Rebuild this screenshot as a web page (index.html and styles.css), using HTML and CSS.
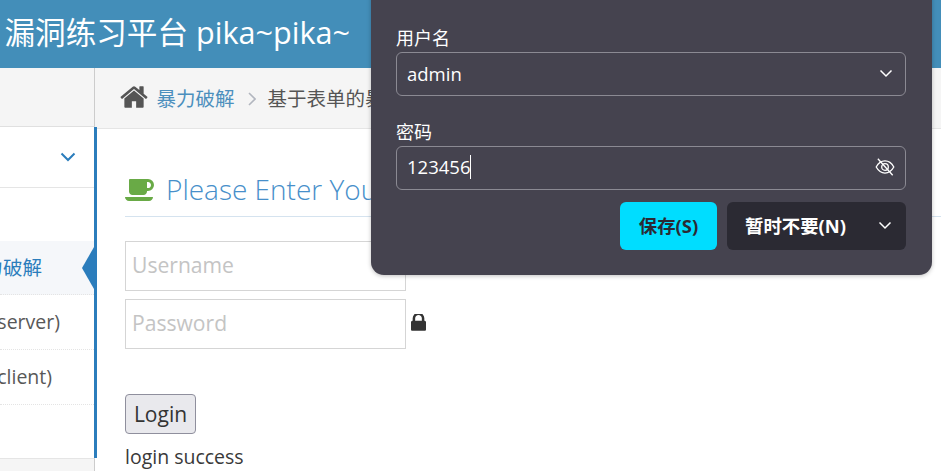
FILE: index.html
```html
<!DOCTYPE html>
<html lang="zh">
<head>
<meta charset="utf-8">
<title>Pikachu</title>
<link rel="stylesheet" href="styles.css">
</head>
<body>
<div class="page">
  <header class="topbar">漏洞练习平台 pika~pika~</header>
  <div class="layout">
    <aside class="sidebar">
      <div class="shortcuts"></div>
      <nav class="nav">
        <div class="nav-head">
          <svg class="nav-chevron" viewBox="0 0 16 10"><path d="M1.500 1.500 8 8l6.500-6.500" fill="none" stroke="currentColor" stroke-width="2"/></svg>
        </div>
        <div class="nav-gap"></div>
        <div class="nav-item active"><span>基于表单的暴力破解</span></div>
        <div class="nav-item"><span>验证码绕过(on server)</span></div>
        <div class="nav-item"><span>验证码绕过(on client)</span></div>
        <div class="nav-rest"></div>
      </nav>
      <div class="side-foot"></div>
    </aside>
    <main class="main">
      <div class="breadcrumb">
        <svg class="home" viewBox="0 0 1792 1792"><path d="M1472 992v480q0 26-19 45t-45 19h-384v-384h-256v384h-384q-26 0-45-19t-19-45v-480q0-1 .5-3t.5-3l575-474 575 474q1 2 1 6zm223-69l-62 74q-8 9-21 11h-3q-13 0-21-7l-692-577-692 577q-12 8-24 7-13-2-21-11l-62-74q-8-10-7-23.500t11-21.500l719-599q32-26 76-26t76 26l244 204v-195q0-14 9-23t23-9h192q14 0 23 9t9 23v408l219 182q10 8 11 21.500t-7 23.500z"/></svg>
        <a class="crumb-link">暴力破解</a>
        <svg class="crumb-sep" viewBox="0 0 8 14"><path d="M1 1l6 6-6 6" fill="none" stroke="currentColor" stroke-width="1.600"/></svg>
        <span class="crumb-text">基于表单的暴力破解</span>
      </div>
      <section class="content">
        <h4 class="title">
          <svg class="coffee" viewBox="-64 256 1920 1408"><path d="M1600 640q0-80-56-136t-136-56h-64v384h64q80 0 136-56t56-136zm-1664 768h1792q0 106-75 181t-181 75h-1280q-106 0-181-75t-75-181zm1856-768q0 159-112.500 271.500t-271.500 112.500h-64v32q0 92-66 158t-158 66h-704q-92 0-158-66t-66-158v-736q0-26 19-45t45-19h1152q159 0 271.500 112.500t112.500 271.500z"/></svg>
          <span>Please Enter Your Information</span>
        </h4>
        <div class="field"><input class="input" placeholder="Username"></div>
        <div class="field">
          <input class="input" placeholder="Password">
          <svg class="lock" viewBox="320 256 1152 1280"><path d="M640 768h512v-192q0-106-75-181t-181-75-181 75-75 181v192zm832 96v576q0 40-28 68t-68 28h-960q-40 0-68-28t-28-68v-576q0-40 28-68t68-28h32v-192q0-184 132-316t316-132 316 132 132 316v192h32q40 0 68 28t28 68z"/></svg>
        </div>
        <button class="login">Login</button>
        <p class="status">login success</p>
      </section>
    </main>
  </div>
  <div class="popup">
    <label class="pop-label">用户名</label>
    <div class="pop-input">
      <span>admin</span>
      <svg class="pop-chevron" viewBox="0 0 14 9"><path d="M1.500 1.500 7 7l5.500-5.500" fill="none" stroke="currentColor" stroke-width="1.500"/></svg>
    </div>
    <label class="pop-label second">密码</label>
    <div class="pop-input">
      <span class="typed">123456</span>
      <svg class="pop-eye" viewBox="0 0 20 20" fill="none" stroke="currentColor" stroke-width="1.200"><path d="M2 10c2-3.600 4.800-5.500 8-5.500s6 1.900 8 5.500c-2 3.600-4.800 5.500-8 5.500S4 13.600 2 10z"/><circle cx="10" cy="10" r="3"/><path d="M3.500 2.500l13.500 15"/></svg>
    </div>
    <div class="pop-actions">
      <button class="btn-save">保存(S)</button>
      <button class="btn-later">
        <span>暂时不要(N)</span>
        <svg class="pop-chevron" viewBox="0 0 14 9"><path d="M1.500 1.500 7 7l5.500-5.500" fill="none" stroke="currentColor" stroke-width="1.500"/></svg>
      </button>
    </div>
  </div>
</div>
</body>
</html>
```
FILE: styles.css
```css
* { box-sizing: border-box; }
html, body { margin: 0; height: 100%; overflow: hidden; }
body {
  background: #fff;
  color: #393939;
  font-family: "Open Sans", "Noto Sans CJK SC", sans-serif;
  font-size: 19.5px;
}
.page { position: relative; width: 941px; height: 471px; overflow: hidden; display: flex; flex-direction: column; }
.topbar {
  height: 68px;
  flex: none;
  background: #438eb9;
  color: #fff;
  font-size: 30.6px;
  line-height: 65px;
  padding-left: 4.5px;
  white-space: nowrap;
}
.layout { display: flex; flex: 1; min-height: 0; }
.sidebar { width: 97px; flex: none; display: flex; flex-direction: column; }
.shortcuts {
  height: 59px;
  flex: none;
  background: #f5f5f5;
  border-right: 1px solid #ccc;
  margin-right: 2px;
  border-bottom: 1px solid #e0e0e0;
}
.nav {
  height: 331px;
  flex: none;
  border-right: 3px solid #2b7dbc;
  display: flex;
  flex-direction: column;
  position: relative;
}
.nav-head {
  height: 61px;
  flex: none;
  border-bottom: 1px solid #e5e5e5;
  display: flex;
  align-items: center;
  justify-content: flex-end;
  padding: 0 18px 0 0;
}
.nav-chevron { width: 16px; height: 10px; color: #2b7dbc; }
.nav-gap { height: 53px; flex: none; }
.nav-item {
  height: 55px;
  flex: none;
  display: flex;
  justify-content: flex-end;
  align-items: center;
  overflow: hidden;
  white-space: nowrap;
  border-bottom: 1px dotted #e4e4e4;
  padding-bottom: 3px;
  color: #585858;
  font-size: 19.5px;
}
.nav-item span { flex: none; }
.nav-item:nth-of-type(4) span { margin-right: 34px; }
.nav-item:nth-of-type(5) span { margin-right: 42px; }
.nav-item.active {
  background: #f5f7fa;
  color: #2b7dbc;
  position: relative;
  height: 54px;
  padding-bottom: 2px;
  overflow: visible;
  clip-path: inset(0 -12px 0 0);
}
.nav-item.active span { margin-right: 52px; }
.nav-item.active::after {
  content: "";
  position: absolute;
  right: 0;
  top: 50%;
  margin-top: -21px;
  border: 21px solid transparent;
  border-left: 0;
  border-right: 12px solid #2b7dbc;
}
.nav-rest { flex: 1; }
.side-foot {
  flex: 1;
  background: #f5f5f5;
  border-top: 1px solid #e5e5e5;
  border-right: 1px solid #ccc;
  margin-right: 2px;
}
.main { flex: 1; min-width: 0; margin-left: -2px; }
.breadcrumb {
  height: 61px;
  background: #f5f5f5;
  border-bottom: 1px solid #e5e5e5;
  display: flex;
  align-items: center;
  white-space: nowrap;
  padding: 0 0 2px 24px;
  overflow: hidden;
}
.home { width: 30px; height: 30px; fill: #555; flex: none; }
.crumb-link { color: #4c8fbd; margin-left: 7.5px; }
.crumb-sep { width: 8px; height: 14px; color: #b2b6bf; margin: 3px 12px 0 13px; flex: none; }
.crumb-text { color: #555; }
.content { padding: 0 0 0 30px; }
.title {
  margin: 39px 0 24px;
  height: 49px;
  display: flex;
  align-items: center;
  gap: 11px;
  border-bottom: 1px solid #d5e3ef;
  color: #478fca;
  font-size: 28px;
  font-weight: 300;
  white-space: nowrap;
  padding-bottom: 7px;
}
.coffee { width: 30px; height: 22px; fill: #69aa46; flex: none; margin-top: 2px; }
.field { display: flex; align-items: center; gap: 5px; margin-bottom: 8px; height: 50px; }
.input {
  width: 281px;
  height: 50px;
  padding: 0 6px 4px;
  border: 1px solid #d5d5d5;
  font: inherit;
  font-size: 21.1px;
  color: #858585;
  background: #fff;
  outline: none;
  border-radius: 0;
}
.input::placeholder { color: #c4c4c4; opacity: 1; }
.lock { width: 15px; height: 17px; fill: #333; margin-bottom: 3px; }
.login {
  display: block;
  margin-top: 45px;
  width: 71px;
  height: 40px;
  padding: 0;
  font: inherit;
  font-size: 21px;
  color: #333;
  background: #e9e9ed;
  border: 1px solid #8f8f9d;
  border-radius: 4px;
}
.status { margin: 8px 0 0; font-size: 19.5px; line-height: 30px; color: #393939; }

.popup {
  position: absolute;
  left: 371px;
  top: -10px;
  width: 561px;
  height: 285px;
  padding: 36px 26px 0 25px;
  background: #45434f;
  border-radius: 0 0 13px 13px;
  box-shadow: 0 1px 4px rgba(0, 0, 0, 0.25);
  color: #fff;
}
.pop-label { display: block; line-height: 24px; height: 26px; font-size: 18px; }
.pop-label.second { margin-top: 24px; }
.pop-input {
  height: 44px;
  border: 1px solid #8b8a93;
  border-radius: 6px;
  display: flex;
  align-items: center;
  justify-content: space-between;
  padding: 0 12px 2px 10px;
  font-size: 18.5px;
}
.typed { border-right: 1px solid #fff; line-height: 24px; }
.pop-chevron { width: 14px; height: 9px; color: #fff; flex: none; }
.pop-eye { width: 22px; height: 22px; color: #fff; flex: none; margin-right: -3px; }
.pop-actions { display: flex; justify-content: flex-end; gap: 10px; margin-top: 12px; }
.btn-save, .btn-later {
  height: 48px;
  border: 0;
  border-radius: 6px;
  font: inherit;
  font-size: 18.4px;
  font-weight: 700;
  padding: 0 0 2px;
}
.btn-save { width: 97px; background: #00ddff; color: #2b2a33; }
.btn-later {
  width: 179px;
  background: #2b2a33;
  color: #fff;
  display: flex;
  align-items: center;
  justify-content: space-between;
  padding: 0 14px 2px 18px;
}
```
